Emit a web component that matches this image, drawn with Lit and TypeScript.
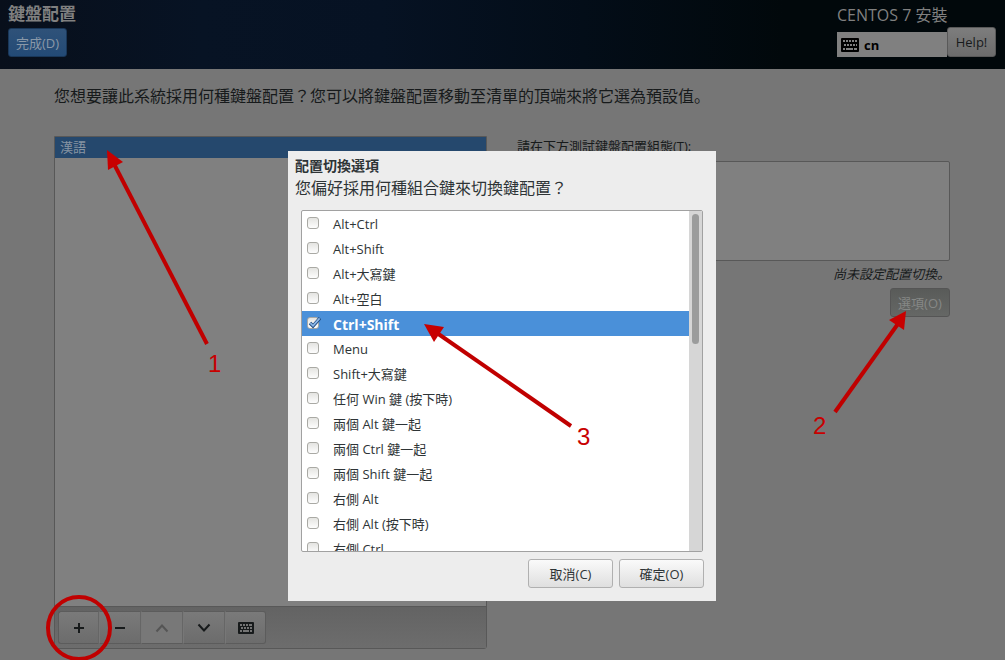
import { LitElement, html, css, svg } from "lit";
import { customElement, property, state } from "lit/decorators.js";
import { classMap } from "lit/directives/class-map.js";

const keyboardIcon = (fill: string, keys: string) => html`
  <svg class="kbd" viewBox="0 0 18 14" width="18" height="14" aria-hidden="true">
    <rect x="0" y="0" width="18" height="14" rx="1" fill=${fill}></rect>
    ${[2, 5, 8, 11, 14].map((x) => svg`<rect x=${x} y="2" width="2" height="2" fill=${keys}></rect>`)}
    ${[3, 6, 9, 12].map((x) => svg`<rect x=${x} y="6" width="2" height="2" fill=${keys}></rect>`)}
    <path d="M2 10h2v2h-2zM5 10h7v2h-7zM13 10h3v2h-3zM15 6h1v2h-1z" fill=${keys}></path>
  </svg>
`;

@customElement("switch-dialog")
class SwitchDialog extends LitElement {
  @property({ attribute: false }) options: string[] = [];
  @state() private chosen = 4;

  static styles = css`
    :host {
      display: block;
      box-sizing: border-box;
      padding: 5px 13px 13px;
      background: #ededed;
      color: #2e3436;
    }
    h2 {
      margin: 0 0 0 -6px;
      font-size: 14px;
      line-height: 19px;
      font-weight: 700;
    }
    p {
      margin: 0 0 8px -6px;
      font-size: 16px;
      line-height: 27px;
    }
    .frame {
      display: flex;
      height: 340px;
      border: 1px solid #a1a1a1;
      border-radius: 2px;
      background: #fff;
      overflow: hidden;
    }
    .list {
      flex: 1;
      margin: 0;
      padding: 0;
      list-style: none;
      overflow: hidden;
    }
    .row {
      display: flex;
      gap: 14px;
      height: 25px;
      padding-left: 5px;
      font-size: 13px;
      line-height: 27px;
    }
    .row.on {
      background: #4a90d9;
      color: #fff;
      font-size: 14px;
      font-weight: 700;
    }
    .tick {
      display: grid;
      align-content: start;
      width: 12px;
    }
    .tick input {
      grid-area: 1 / 1;
      appearance: none;
      width: 12px;
      height: 12px;
      margin: 6px 0 0;
      border: 1px solid #a9a9a4;
      border-radius: 3px;
      background: linear-gradient(#e4e4e1, #fdfdfd);
    }
    .tick svg {
      grid-area: 1 / 1;
      margin-top: 5px;
      pointer-events: none;
    }
    .row label {
      white-space: nowrap;
    }
    .track {
      width: 13px;
      box-sizing: border-box;
      padding: 3px;
      background: #d6d6d6;
    }
    .thumb {
      width: 7px;
      height: 130px;
      border-radius: 4px;
      background: #9b9c9c;
    }
    .actions {
      display: flex;
      justify-content: flex-end;
      gap: 6px;
      margin: 7px -1px 0 0;
    }
    .actions button {
      width: 85px;
      height: 29px;
      padding: 0;
      border: 1px solid #b0b0b0;
      border-radius: 3px;
      background: linear-gradient(#fafafa, #dfdfdf);
      color: #2e3436;
      font: inherit;
      font-size: 13px;
    }
  `;

  render() {
    return html`
      <h2 id="title">配置切換選項</h2>
      <p>您偏好採用何種組合鍵來切換鍵配置？</p>
      <div class="frame">
        <ul class="list">
          ${this.options.map(
            (text, i) => html`
              <li class=${classMap({ row: true, on: i === this.chosen })}>
                <span class="tick">
                  <input
                    type="checkbox"
                    id="opt-${i}"
                    .checked=${i === this.chosen}
                    @change=${() => (this.chosen = i)}
                  />
                  ${i === this.chosen
                    ? html`<svg viewBox="0 0 14 13" width="14" height="13" aria-hidden="true">
                        <path d="M3 7l3 3 7-8" fill="none" stroke="#1f4a80" stroke-width="3.4"></path>
                        <path d="M3.3 7.2l2.7 2.6 6.6-7.4" fill="none" stroke="#8db8e8" stroke-width="1.7"></path>
                      </svg>`
                    : ""}
                </span>
                <label for="opt-${i}">${text}</label>
              </li>
            `
          )}
        </ul>
        <div class="track"><div class="thumb"></div></div>
      </div>
      <div class="actions">
        <button type="button">取消(C)</button>
        <button type="button">確定(O)</button>
      </div>
    `;
  }
}

@customElement("app-root")
class AppRoot extends LitElement {
  private options = [
    "Alt+Ctrl",
    "Alt+Shift",
    "Alt+大寫鍵",
    "Alt+空白",
    "Ctrl+Shift",
    "Menu",
    "Shift+大寫鍵",
    "任何 Win 鍵 (按下時)",
    "兩個 Alt 鍵一起",
    "兩個 Ctrl 鍵一起",
    "兩個 Shift 鍵一起",
    "右側 Alt",
    "右側 Alt (按下時)",
    "右側 Ctrl",
  ];

  static styles = css`
    :host {
      display: flex;
      flex-direction: column;
      position: relative;
      min-height: 100vh;
      overflow: hidden;
      background: #767676;
      color: #171a1b;
      font-family: "Open Sans", "Noto Sans CJK JP", sans-serif;
      font-size: 13px;
    }
    button {
      box-sizing: border-box;
      margin: 0;
      padding: 0;
      font: inherit;
    }
    header {
      display: flex;
      justify-content: space-between;
      box-sizing: border-box;
      height: 69px;
      padding: 4px 9px 0 8px;
      background: linear-gradient(90deg, #080f1b, #071324 20%, #061223 38%, #030d18 58%, #01080b 78%, #01080b);
      color: #808080;
    }
    h1 {
      margin: 0 0 5px;
      font-size: 17px;
      line-height: 19px;
      font-weight: 700;
    }
    .done {
      width: 59px;
      height: 29px;
      border: 1px solid #193759;
      border-radius: 3px;
      background: linear-gradient(#2f5279, #234a76);
      color: #8a98a8;
    }
    .product {
      font-size: 16px;
      line-height: 22px;
    }
    .tools {
      display: flex;
      align-items: flex-start;
    }
    .layout {
      display: flex;
      align-items: center;
      gap: 5px;
      box-sizing: border-box;
      width: 110px;
      height: 25px;
      margin-top: 6px;
      padding-left: 4px;
      background: #808080;
      color: #000;
      font-weight: 700;
    }
    .help {
      width: 49px;
      height: 30px;
      margin-top: 1px;
      border: 1px solid #595959;
      border-radius: 3px;
      background: linear-gradient(#7d7d7d, #6c6c6c);
      color: #171a1b;
    }
    main {
      flex: 1;
      display: flex;
      flex-direction: column;
      padding: 14px 55px 11px 54px;
    }
    .intro {
      margin: 0 0 26px;
      font-size: 16px;
      line-height: 27px;
    }
    .columns {
      flex: 1;
      display: grid;
      grid-template-columns: 1fr 1fr;
      gap: 30px;
    }
    .left {
      display: flex;
      flex-direction: column;
      border: 1px solid #585858;
      border-radius: 0 0 3px 3px;
    }
    .entries {
      flex: 1;
      margin: 0;
      padding: 0;
      list-style: none;
      background: #808080;
    }
    .entries li {
      padding-left: 5px;
      line-height: 21px;
      background: #25486d;
      color: #8895a3;
    }
    .bar {
      display: flex;
      padding: 4px 3px;
      border-top: 1px solid #585858;
      background: linear-gradient(#636363, #6d6d6d);
    }
    .bar button {
      display: grid;
      place-items: center;
      width: 42px;
      height: 33px;
      border: 1px solid #5c5c5c;
      border-left-color: #777;
      border-right-color: #666;
      border-radius: 0;
      background: linear-gradient(#7a7a7a, #6c6c6c);
      color: #171a1b;
    }
    .bar button:first-child {
      width: 41px;
      border-left-color: #5c5c5c;
      border-radius: 3px 0 0 3px;
    }
    .bar button:last-child {
      width: 41px;
      border-right-color: #5c5c5c;
      border-radius: 0 3px 3px 0;
    }
    .bar button:disabled {
      background: #787878;
      color: #555;
    }
    .right {
      display: flex;
      flex-direction: column;
      align-items: flex-end;
    }
    .right label {
      align-self: stretch;
      line-height: 20px;
      margin-bottom: 5px;
    }
    textarea {
      align-self: stretch;
      box-sizing: border-box;
      height: 100px;
      margin: 0 0 3px;
      border: 1px solid #585858;
      border-radius: 2px;
      background: #808080;
      resize: none;
    }
    .status {
      margin: 0;
      font-style: italic;
      line-height: 20px;
    }
    .options {
      width: 60px;
      height: 29px;
      margin-top: 4px;
      border: 1px solid #555;
      border-radius: 3px;
      background: linear-gradient(#595b59, #656765);
      color: #868886;
    }
    switch-dialog {
      position: absolute;
      top: 151px;
      left: calc((100% - 429px) / 2);
      width: 428px;
    }
    .marks {
      position: absolute;
      top: 0;
      left: 0;
      pointer-events: none;
      font-family: "Liberation Sans", Arial, sans-serif;
      font-size: 24px;
    }
  `;

  render() {
    return html`
      <header>
        <div>
          <h1>鍵盤配置</h1>
          <button class="done" type="button">完成(D)</button>
        </div>
        <div>
          <div class="product">CENTOS 7 安裝</div>
          <div class="tools">
            <div class="layout">${keyboardIcon("#000", "#808080")}<span>cn</span></div>
            <button class="help" type="button">Help!</button>
          </div>
        </div>
      </header>
      <main>
        <p class="intro">您想要讓此系統採用何種鍵盤配置？您可以將鍵盤配置移動至清單的頂端來將它選為預設值。</p>
        <div class="columns">
          <section class="left">
            <ul class="entries">
              <li>漢語</li>
            </ul>
            <div class="bar">
              <button type="button" aria-label="add">
                <svg width="12" height="12"><path d="M6 1v10M1 6h10" stroke="currentColor" stroke-width="2"></path></svg>
              </button>
              <button type="button" aria-label="remove">
                <svg width="12" height="12"><path d="M1 6h10" stroke="currentColor" stroke-width="2"></path></svg>
              </button>
              <button type="button" aria-label="up" disabled>
                <svg width="14" height="12"><path d="M1.500 9.500l5.500-6 5.500 6" fill="none" stroke="currentColor" stroke-width="2"></path></svg>
              </button>
              <button type="button" aria-label="down">
                <svg width="14" height="12"><path d="M1.500 2.500l5.500 6 5.500-6" fill="none" stroke="currentColor" stroke-width="2"></path></svg>
              </button>
              <button type="button" aria-label="preview">
                <svg width="16" height="12" viewBox="0 0 16 12">
                  <rect width="16" height="12" rx="1" fill="#171a1b"></rect>
                  <path
                    d="M2 3h2M5 3h2M8 3h2M11 3h3M3 6h2M6 6h2M9 6h2M12 6h2M2 9h2M5 9h6M12 9h2"
                    stroke="#747474"
                    stroke-width="2"
                  ></path>
                </svg>
              </button>
            </div>
          </section>
          <section class="right">
            <label for="test">請在下方測試鍵盤配置組態(T):</label>
            <textarea id="test"></textarea>
            <p class="status">尚未設定配置切換。</p>
            <button class="options" type="button" disabled>選項(O)</button>
          </section>
        </div>
      </main>
      <switch-dialog role="dialog" .options=${this.options}></switch-dialog>
      <svg class="marks" width="1005" height="660" viewBox="0 0 1005 660" aria-hidden="true">
        <g fill="none" stroke="#c00000" stroke-width="4">
          <path d="M207 344L113 162"></path>
          <path d="M835 412L900 321"></path>
          <path d="M571 426L437 333"></path>
          <circle cx="79" cy="628" r="31"></circle>
        </g>
        <g fill="#c80000">
          <path d="M107 150l16 12-15 8z"></path>
          <path d="M906 311l-2 19-15-10z"></path>
          <path d="M424 324l20 3-10 15z"></path>
          <text x="208" y="372">1</text>
          <text x="813" y="434">2</text>
          <text x="577" y="445">3</text>
        </g>
      </svg>
    `;
  }
}
